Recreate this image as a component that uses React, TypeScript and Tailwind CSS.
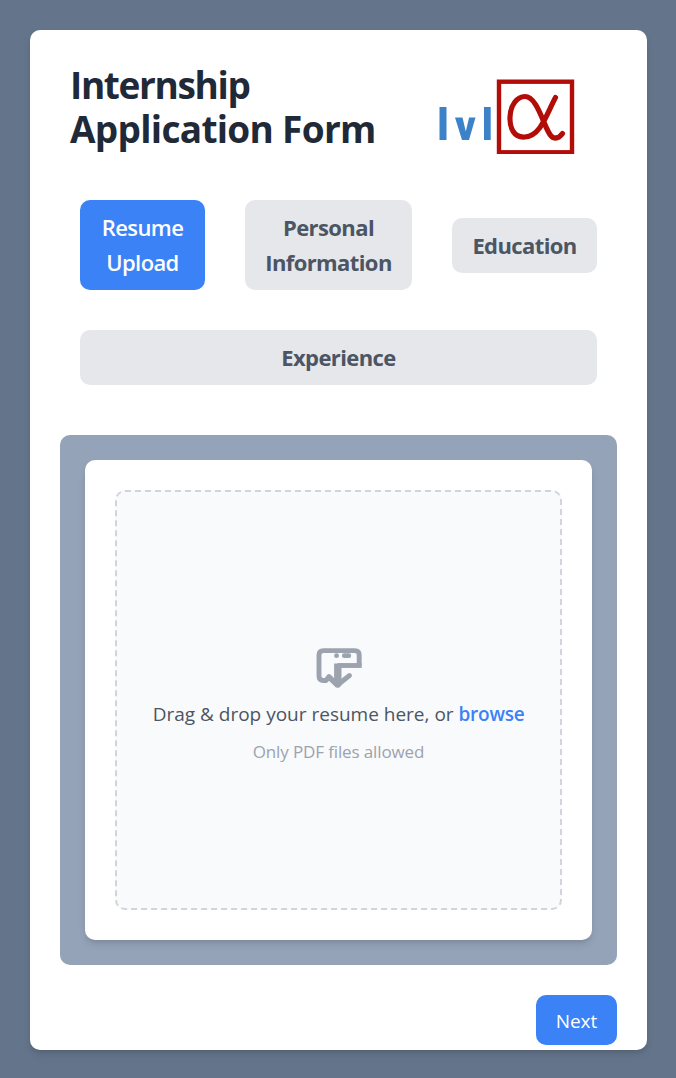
import type { ReactNode } from 'react';

function Logo() {
  return (
    <svg viewBox="0 0 138 78" className="h-[78px] w-[138px]" aria-label="lvl alpha">
      <g fill="#3c82c8">
        <rect x="1.500" y="31" width="7" height="33" />
        <path d="M17 41.500h7.500l3.300 14 3.300-14H37.500l-6.500 22.500h-7z" />
        <rect x="46" y="31" width="6.700" height="33" />
      </g>
      <g fill="none" stroke="#b20d08">
        <rect x="61" y="5.700" width="73" height="70.600" strokeWidth="4.400" />
        <path d="M117.500 21.500C109 37 103 60 87 61C76 62 71.500 52 72 41C72.500 29 79 20.500 87 20.500C101 20.500 107 58 115 61.500C119 63 122 61 124.500 57.500" strokeWidth="5.200" strokeLinecap="round" />
      </g>
    </svg>
  );
}

function UploadIcon() {
  return (
    <svg viewBox="312 644 54 48" className="h-12 w-[54px]" fill="none" stroke="#9ca3af" strokeWidth="4.900" strokeLinecap="round" strokeLinejoin="round" aria-hidden="true">
      <path d="M359.200 665.500V655Q359.200 650.600 354.800 650.600H323.500Q319 650.600 319 655V676Q319 680.500 323.500 680.500H326L329 676.500L337.500 685L349.500 675.500" />
      <path d="M361.600 665.500H337.500" strokeLinecap="butt" />
      <path d="M337.800 663.500V684" strokeWidth="7.400" strokeLinecap="butt" />
      <path d="M326 678L329 676L334 679H342L349 676L339.500 687.500H336Z" fill="#9ca3af" stroke="none" />
      <path d="M336.500 655.700h.1M344.300 655.700h4.500" strokeWidth="4.800" />
    </svg>
  );
}

function Tab({ active = false, className, children }: { active?: boolean; className: string; children: ReactNode }) {
  return (
    <button className={`rounded-[10px] py-[10px] text-center text-[22px] leading-[35px] tracking-[-0.6px] ${active ? 'bg-[#3b82f6] font-semibold text-white' : 'bg-[#e5e7eb] font-bold text-[#4b5563]'} ${className}`}>
      {children}
    </button>
  );
}

export default function App() {
  return (
    <div className="flex h-[1078px] w-[676px] bg-[#64748b] px-[30px] pt-[30px] font-['Open_Sans','Noto_Sans',sans-serif]">
      <main className="mr-[-1px] h-[1020px] w-[617px] shrink-0 rounded-[10px] bg-white px-[30px] pt-[30px] shadow-[0_5px_8px_-1px_rgba(0,0,0,0.1),0_3px_5px_-2px_rgba(0,0,0,0.1)]">
        <header className="flex h-[110px] pl-[10px] pt-[2px]">
          <h1 className="w-[368px] whitespace-nowrap text-[37px] font-bold leading-[45px] text-[#1f2937]">
            <span className="block tracking-[-1.35px]">Internship</span>
            <span className="-mt-px block tracking-[-0.7px]">Application Form</span>
          </h1>
          <div className="pt-[14px]"><Logo /></div>
        </header>
        <nav className="mx-[20px] mt-[30px] flex flex-wrap items-center gap-[40px]">
          <Tab active className="w-[125px]">Resume<br />Upload</Tab>
          <Tab className="w-[167px]">Personal<br />Information</Tab>
          <Tab className="w-[145px]">Education</Tab>
          <Tab className="w-full">Experience</Tab>
        </nav>
        <section className="mt-[50px] h-[530px] rounded-[10px] bg-[#94a3b8] p-[25px]">
          <div className="h-[480px] rounded-[10px] bg-white p-[30px] shadow-[0_5px_8px_-1px_rgba(0,0,0,0.1),0_3px_5px_-2px_rgba(0,0,0,0.1)]">
            <div className="flex h-[420px] flex-col items-center rounded-[10px] border-2 border-dashed border-[#d1d5db] bg-[#f9fafb] pt-[152px]">
              <UploadIcon />
              <p className="mt-[7px] whitespace-nowrap text-[19px] leading-[30px] text-[#4b5563]">
                Drag &amp; drop your resume here, or <span className="font-semibold tracking-[-0.25px] text-[#3b82f6]">browse</span>
              </p>
              <p className="mt-[10px] whitespace-nowrap text-[17px] leading-[25px] tracking-[-0.13px] text-[#9ca3af]">Only PDF files allowed</p>
            </div>
          </div>
        </section>
        <div className="mt-[30px] flex justify-end">
          <button className="h-[50px] w-[81px] rounded-[10px] bg-[#3b82f6] pt-px text-[19px] leading-[30px] text-white">Next</button>
        </div>
      </main>
    </div>
  );
}
